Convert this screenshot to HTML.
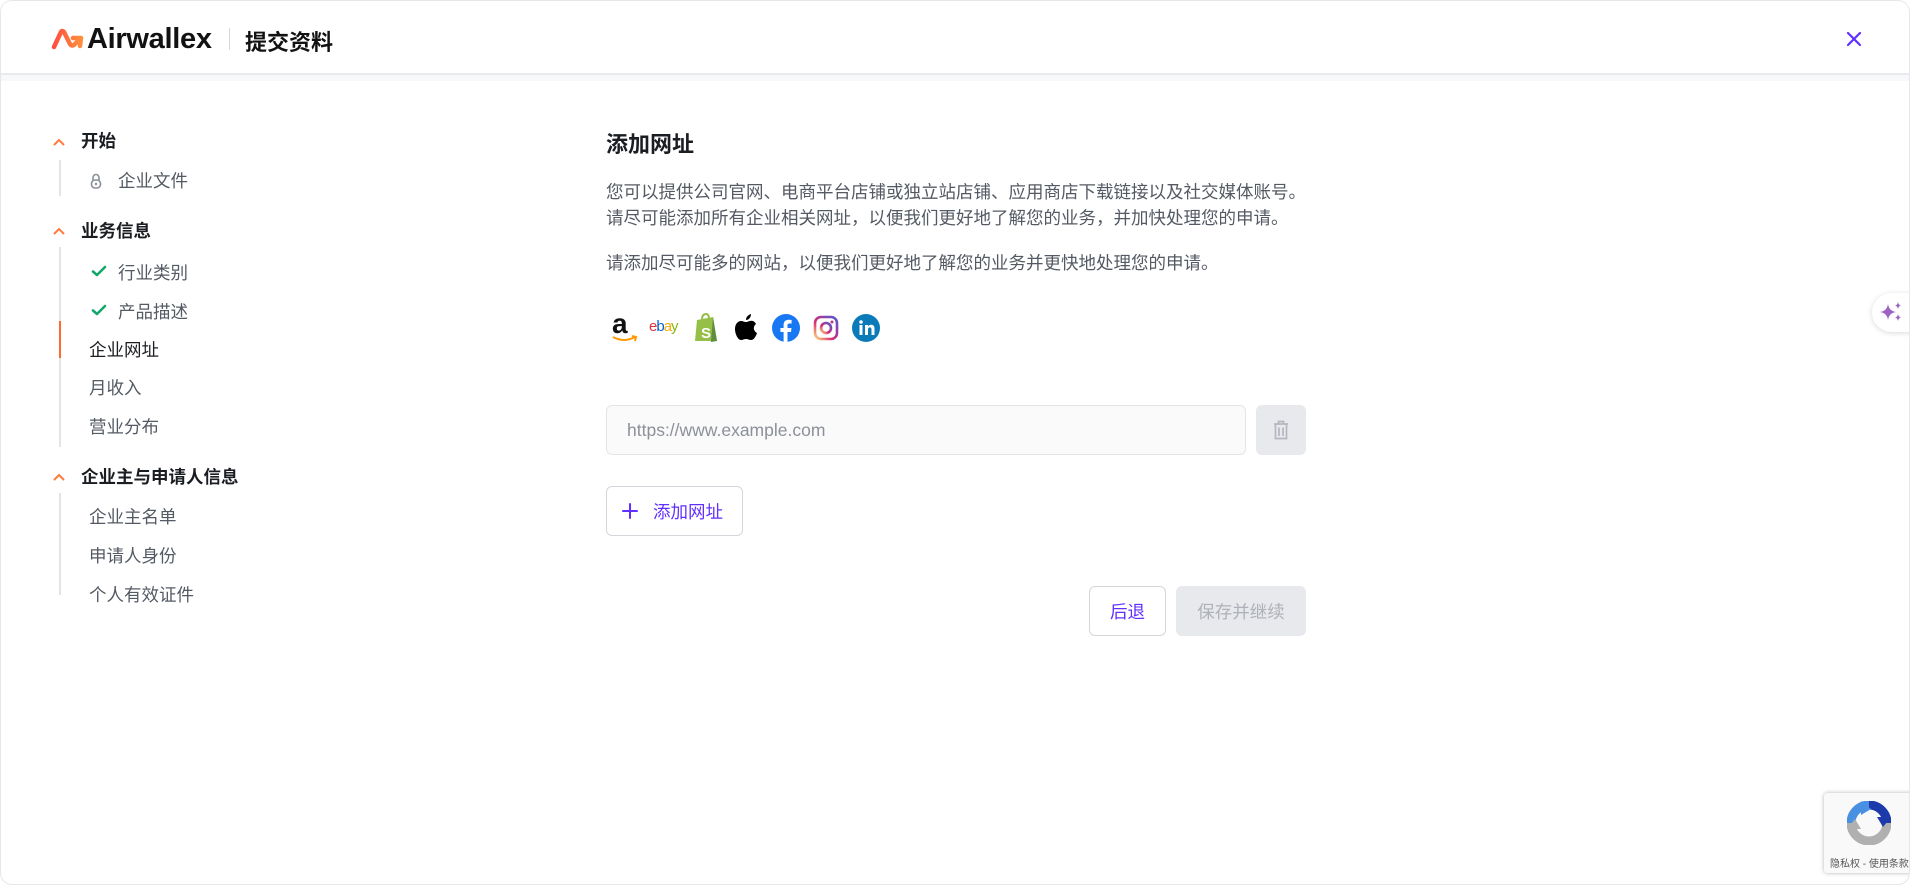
<!DOCTYPE html>
<html><head><meta charset="utf-8"><style>
*{box-sizing:border-box;margin:0;padding:0}
html,body{width:1910px;height:885px;overflow:hidden;background:#fff;font-family:"Liberation Sans","Noto Sans CJK SC",sans-serif}
.page{position:absolute;left:0;top:0;width:1910px;height:885px;border:1px solid #e6e7ea;border-radius:12px;overflow:hidden;background:#fff}
.hdr{position:absolute;left:0;top:0;width:100%;height:74px;border-bottom:2px solid #e9eaee;background:#fff}
.band{position:absolute;left:0;top:74px;width:100%;height:6px;background:#f7f8fa}
.abs{position:absolute;white-space:nowrap}
.h{font-weight:bold;color:#1a1d21;font-size:17.5px;line-height:22px}
.s{color:#545a63;font-size:17.5px;line-height:22px}
.vl{position:absolute;left:58px;width:2px;background:#e3e4e8}
.chev{position:absolute;left:52px;width:12px;height:12px}
.p{color:#545a63;font-size:17.5px;line-height:33px}
.btn{position:absolute;border-radius:6px;display:flex;align-items:center;justify-content:center;font-size:17.5px}
</style></head><body><div class="page">
<div class="hdr">
 <svg class="abs" style="left:50px;top:26px" width="34" height="24" viewBox="0 0 34 24"><defs><linearGradient id="g" x1="0" x2="1"><stop offset="0" stop-color="#ff4f42"/><stop offset="1" stop-color="#ff8e3c"/></linearGradient></defs><path d="M3 20 L10 5 Q11 3 13 5 L19 17 Q21 20 24 17 L30 11 L22 11 M30 11 L29 19" fill="none" stroke="url(#g)" stroke-width="4.5" stroke-linecap="round" stroke-linejoin="round"/></svg>
 <div class="abs" style="left:86px;top:22px;font-size:29px;font-weight:bold;color:#121212;letter-spacing:-0.3px;line-height:32px">Airwallex</div>
 <div class="abs" style="left:228px;top:27px;width:1px;height:22px;background:#d8d8dc"></div>
 <div class="abs" style="left:244px;top:24px;font-size:22px;font-weight:bold;color:#121212">提交资料</div>
 <svg class="abs" style="left:1845px;top:30px" width="16" height="16" viewBox="0 0 16 16"><path d="M2 2L14 14M14 2L2 14" stroke="#612fff" stroke-width="2.2" stroke-linecap="round"/></svg>
</div>
<div class="band"></div>

<svg class="chev" style="top:135px" viewBox="0 0 12 12"><path d="M1.5 8.5L6 4L10.5 8.5" fill="none" stroke="#ff7a3d" stroke-width="2" stroke-linecap="round"/></svg>
<div class="abs h" style="left:80px;top:129px">开始</div>
<div class="vl" style="top:159px;height:36px"></div>
<svg class="abs" style="left:89px;top:172px" width="12" height="16" viewBox="0 0 12 16"><path d="M3 7V4.5a3 3 0 0 1 6 0V7" fill="none" stroke="#8a8f98" stroke-width="1.6"/><rect x="1.5" y="7" width="9" height="8" rx="3.5" fill="none" stroke="#8a8f98" stroke-width="1.6"/><circle cx="6" cy="11" r="1.2" fill="#8a8f98"/></svg>
<div class="abs s" style="left:117px;top:169px">企业文件</div>

<svg class="chev" style="top:224px" viewBox="0 0 12 12"><path d="M1.5 8.5L6 4L10.5 8.5" fill="none" stroke="#ff7a3d" stroke-width="2" stroke-linecap="round"/></svg>
<div class="abs h" style="left:80px;top:219px">业务信息</div>
<div class="vl" style="top:246px;height:200px"></div>
<div class="abs" style="left:58px;top:320px;width:2px;height:37px;background:#ff6a2c"></div>
<svg class="abs" style="left:90px;top:263px" width="16" height="14" viewBox="0 0 16 14"><path d="M2 7.5L6 11L14 3" fill="none" stroke="#13a86b" stroke-width="2.6" stroke-linecap="round" stroke-linejoin="round"/></svg>
<div class="abs s" style="left:117px;top:261px">行业类别</div>
<svg class="abs" style="left:90px;top:302px" width="16" height="14" viewBox="0 0 16 14"><path d="M2 7.5L6 11L14 3" fill="none" stroke="#13a86b" stroke-width="2.6" stroke-linecap="round" stroke-linejoin="round"/></svg>
<div class="abs s" style="left:117px;top:300px">产品描述</div>
<div class="abs s" style="left:88px;top:338px;color:#1a1d21">企业网址</div>
<div class="abs s" style="left:88px;top:376px">月收入</div>
<div class="abs s" style="left:88px;top:415px">营业分布</div>

<svg class="chev" style="top:470px" viewBox="0 0 12 12"><path d="M1.5 8.5L6 4L10.5 8.5" fill="none" stroke="#ff7a3d" stroke-width="2" stroke-linecap="round"/></svg>
<div class="abs h" style="left:80px;top:465px">企业主与申请人信息</div>
<div class="vl" style="top:492px;height:102px"></div>
<div class="abs s" style="left:88px;top:505px">企业主名单</div>
<div class="abs s" style="left:88px;top:544px">申请人身份</div>
<div class="abs s" style="left:88px;top:583px">个人有效证件</div>

<div class="abs" style="left:605px;top:126px;font-size:22px;font-weight:bold;color:#1a1d21">添加网址</div>
<div class="abs p" style="left:605px;top:175px">您可以提供公司官网、电商平台店铺或独立站店铺、应用商店下载链接以及社交媒体账号。</div>
<div class="abs p" style="left:605px;top:201px">请尽可能添加所有企业相关网址，以便我们更好地了解您的业务，并加快处理您的申请。</div>
<div class="abs p" style="left:605px;top:246px">请添加尽可能多的网站，以便我们更好地了解您的业务并更快地处理您的申请。</div>

<div class="abs" style="left:611px;top:309px;font-size:28px;font-weight:bold;color:#111;line-height:28px">a</div>
<svg class="abs" style="left:611px;top:334px" width="26" height="8" viewBox="0 0 26 8"><path d="M1 2Q12 8 23 2M20 1L24 2L23 6" fill="none" stroke="#ff9900" stroke-width="2"/></svg>
<div class="abs" style="left:648px;top:316px;font-size:15px;letter-spacing:-1px;line-height:20px"><span style="color:#e53238">e</span><span style="color:#0064d2">b</span><span style="color:#f5af02">a</span><span style="color:#86b817">y</span></div>
<svg class="abs" style="left:692px;top:312px" width="26" height="30" viewBox="0 0 26 30"><path d="M4 7L20 4L24 28L2 28Z" fill="#95bf47"/><path d="M9 7Q9 1 13 1Q16 1 16 6" fill="none" stroke="#95bf47" stroke-width="2"/><path d="M20 4L24 28L18 29Z" fill="#5e8e3e"/><text x="8" y="25" font-size="15" font-weight="bold" fill="#fff" font-family="Liberation Sans">S</text></svg>
<svg class="abs" style="left:733px;top:313px" width="24" height="28" viewBox="0 0 24 28"><path d="M12 8C14 8 16 6 19 7C21 8 22 10 22 10C19 12 19 17 23 19C22 22 20 26 17 26C15 26 14 25 12 25C10 25 9 26 7 26C4 26 1 20 1 15C1 10 4 7 7 7C9 7 10 8 12 8Z" fill="#000"/><path d="M12 6C12 3 14 1 17 0C17 3 15 6 12 6Z" fill="#000"/></svg>
<svg class="abs" style="left:771px;top:313px" width="28" height="28" viewBox="0 0 28 28"><circle cx="14" cy="14" r="14" fill="#1877f2"/><path d="M15.5 28V18H19L19.5 14H15.5V11.5C15.5 10.3 16 9.5 17.6 9.5H19.6V6C19 5.9 17.8 5.8 16.6 5.8C13.6 5.8 11.6 7.6 11.6 11V14H8.4V18H11.6V28Z" fill="#fff"/></svg>
<svg class="abs" style="left:812px;top:314px" width="26" height="26" viewBox="0 0 26 26"><defs><linearGradient id="ig" x1="0" y1="1" x2="1" y2="0"><stop offset="0" stop-color="#feda75"/><stop offset=".4" stop-color="#d62976"/><stop offset="1" stop-color="#4f5bd5"/></linearGradient></defs><rect x="2" y="2" width="22" height="22" rx="6" fill="none" stroke="url(#ig)" stroke-width="2.6"/><circle cx="13" cy="13" r="5" fill="none" stroke="url(#ig)" stroke-width="2.6"/><circle cx="19" cy="7" r="1.5" fill="#c13584"/></svg>
<svg class="abs" style="left:851px;top:313px" width="28" height="28" viewBox="0 0 28 28"><circle cx="14" cy="14" r="14" fill="#0a7bb8"/><rect x="7.5" y="11" width="3" height="10" fill="#fff"/><circle cx="9" cy="8" r="1.8" fill="#fff"/><path d="M13 11H16V12.5C16.6 11.5 17.8 10.8 19.2 10.8C21.6 10.8 22.5 12.3 22.5 15V21H19.5V15.6C19.5 14.3 19.1 13.4 17.8 13.4C16.6 13.4 16 14.3 16 15.6V21H13Z" fill="#fff"/></svg>

<div class="abs" style="left:605px;top:404px;width:640px;height:50px;border:1px solid #e4e5e9;border-radius:6px;background:#fafafb;font-size:17.5px;color:#8c9098;padding:13px 20px;line-height:22px">https://www.example.com</div>
<div class="btn" style="left:1255px;top:404px;width:50px;height:50px;background:#e8e9ed">
<svg width="16" height="20" viewBox="0 0 16 20"><path d="M1 4H15M5.5 4V1.5H10.5V4M2.5 4.5V18.5H13.5V4.5M6 7.5V16M10 7.5V16" fill="none" stroke="#b4b7bf" stroke-width="1.7"/></svg></div>
<div class="btn" style="left:605px;top:485px;width:137px;height:50px;border:1.5px solid #d4d6db;background:#fff;color:#612fff;justify-content:flex-start;padding-left:15px">
<svg width="16" height="16" viewBox="0 0 16 16" style="margin-right:15px"><path d="M8 1V15M1 8H15" stroke="#612fff" stroke-width="2" stroke-linecap="round"/></svg>添加网址</div>
<div class="btn" style="left:1088px;top:585px;width:77px;height:50px;border:1.5px solid #d4d6db;background:#fff;color:#612fff">后退</div>
<div class="btn" style="left:1175px;top:585px;width:130px;height:50px;background:#e8e9ed;color:#aeb1b8">保存并继续</div>

<div class="abs" style="left:1871px;top:292px;width:50px;height:39px;background:#fff;border-radius:20px 0 0 20px;box-shadow:0 1px 6px rgba(0,0,0,.15)">
<svg class="abs" style="left:6px;top:8px" width="26" height="22" viewBox="0 0 26 22"><path d="M10 3Q11 10 18 11Q11 12 10 19Q9 12 2 11Q9 10 10 3Z" fill="#9a63c4"/><path d="M20 1Q20.5 4 23 4.5Q20.5 5 20 8Q19.5 5 17 4.5Q19.5 4 20 1Z" fill="#9a63c4"/><path d="M20 13Q20.5 16 23 16.5Q20.5 17 20 20Q19.5 17 17 16.5Q19.5 16 20 13Z" fill="#9a63c4"/></svg></div>

<div class="abs" style="left:1823px;top:792px;width:92px;height:80px;background:#f9f9f9;border-radius:3px;box-shadow:0 0 4px rgba(0,0,0,.3)">
<svg class="abs" style="left:23px;top:8px" width="44" height="44" viewBox="0 0 44 44">
<path d="M22 4A18 18 0 0 0 4 22" fill="none" stroke="#4a90e2" stroke-width="9"/>
<path d="M22 4A18 18 0 0 1 40 22" fill="none" stroke="#1c3aa9" stroke-width="9"/>
<path d="M4 22A18 18 0 0 0 40 22" fill="none" stroke="#b0b0b0" stroke-width="9"/>
<path d="M14 0L24 8L14 14Z" fill="#4a90e2"/><path d="M44 16L36 26L30 16Z" fill="#1c3aa9"/><path d="M0 28L8 18L14 28Z" fill="#b0b0b0"/></svg>
<div class="abs" style="left:6px;top:62px;font-size:10px;color:#555">隐私权 - 使用条款</div></div>
</div></body></html>
